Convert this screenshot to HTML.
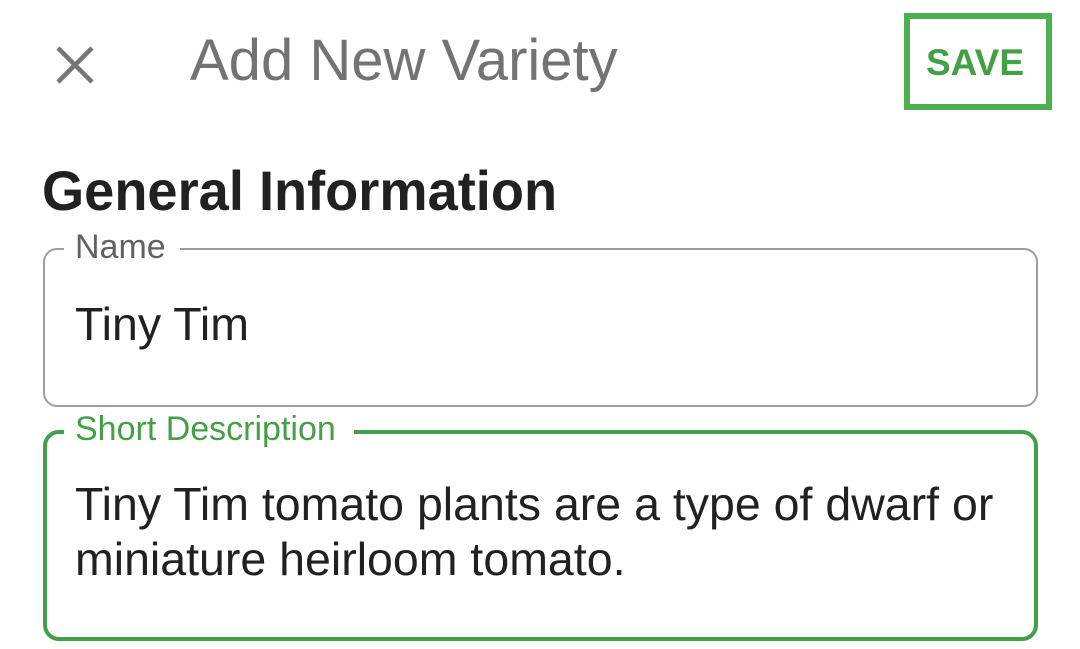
<!DOCTYPE html>
<html><head><style>
body{margin:0;width:1080px;height:649px;background:#fff;position:relative;overflow:hidden;font-family:"Liberation Sans",sans-serif}
.a{position:absolute;white-space:nowrap}
</style></head><body>
<svg class="a" style="left:55px;top:45px" width="40" height="40"><path d="M3 3L37 37M37 3L3 37" stroke="#757575" stroke-width="4.5"/></svg>
<div class="a" style="left:190px;top:27px;font-size:58px;color:#737373;line-height:68px">Add New Variety</div>
<div class="a" style="left:904px;top:13px;width:136px;height:85px;border:6px solid #4caf50"></div>
<div class="a" style="left:926px;top:41px;font-size:37px;color:#43a047;line-height:44px;font-weight:bold">SAVE</div>
<div class="a" style="left:42px;top:158px;font-size:56px;color:#212121;font-weight:bold;line-height:66px;transform:scaleX(0.968);transform-origin:left">General Information</div>
<div class="a" style="left:43px;top:248px;width:991px;height:155px;border:2px solid #9e9e9e;border-radius:14px"></div>
<div class="a" style="left:64px;top:240px;width:116px;height:14px;background:#fff"></div>
<div class="a" style="left:75px;top:228px;font-size:34px;color:#616161;line-height:38px">Name</div>
<div class="a" style="left:75px;top:296px;font-size:46.5px;color:#212121;line-height:56px">Tiny Tim</div>
<div class="a" style="left:43px;top:430px;width:987px;height:203px;border:4px solid #43a047;border-radius:16px"></div>
<div class="a" style="left:64px;top:424px;width:290px;height:14px;background:#fff"></div>
<div class="a" style="left:75px;top:410px;font-size:34px;color:#43a047;line-height:38px">Short Description</div>
<div class="a" style="left:75px;top:477px;font-size:46.5px;color:#212121;line-height:55px">Tiny Tim tomato plants are a type of dwarf or<br>miniature heirloom tomato.</div>
</body></html>
